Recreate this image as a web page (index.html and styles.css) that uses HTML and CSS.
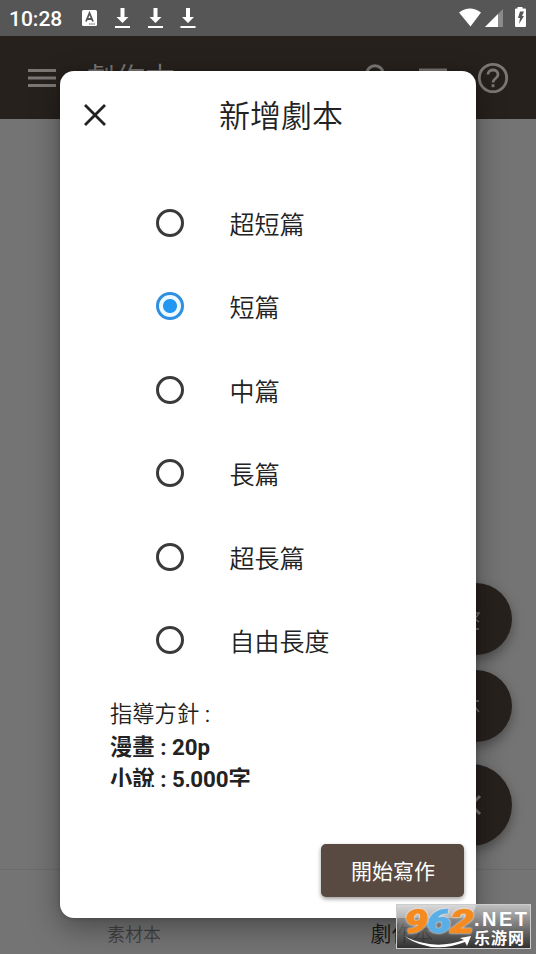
FILE: index.html
```html
<!DOCTYPE html>
<html lang="zh-Hant">
<head>
<meta charset="utf-8">
<title>劇作本</title>
<link rel="stylesheet" href="styles.css">
</head>
<body>
<div class="screen">
  <header class="status">
    <span class="clock">10:28</span>
    <svg class="status-left" width="116" height="24" viewBox="0 0 116 24">
      <rect x="0" y="4" width="15" height="16" rx="1.5" fill="#fff"/>
      <path d="M4 15.5 7.5 7 11 15.5M5.3 13h4.4" fill="none" stroke="#565656" stroke-width="1.8"/>
      <path d="M7 18h6" stroke="#565656" stroke-width="1" stroke-dasharray="1.5 .7"/>
      <g fill="#fff">
        <path id="dl" d="M38.500 2h4v9h4l-6 6-6-6h4zM33 20h15v2H33z"/>
        <use href="#dl" x="33"/>
        <use href="#dl" x="65.500"/>
      </g>
    </svg>
    <svg class="status-right" width="70" height="24" viewBox="0 0 70 24">
      <path d="M0 6.500Q11-1.500 22 6.500L11.500 20.500z" fill="#fff"/>
      <path d="M44 3v18H26z" fill="#8b8b8b"/>
      <path d="M39 8v13H26z" fill="#fff"/>
      <path d="M58.500 1h5v1.500H66q1 0 1 1V20q0 1-1 1h-9q-1 0-1-1V3.500q0-1 1-1h1.500z" fill="#fff"/>
      <path d="M61 5.500h4L63 10h2l-5 8 1-6h-2z" fill="#565656"/>
    </svg>
  </header>
  <div class="appbar">
    <svg width="28" height="20" viewBox="0 0 28 20"><path d="M0 2.500h28M0 10h28M0 17.500h28" stroke="#7b7775" stroke-width="3"/></svg>
    <h1>劇作本</h1>
    <svg class="search" width="30" height="30" viewBox="0 0 30 30"><circle cx="11" cy="11" r="8.300" fill="none" stroke="#7b7775" stroke-width="3"/><path d="m17 17 9 9" stroke="#7b7775" stroke-width="3"/></svg>
    <svg class="sort" width="28" height="20" viewBox="0 0 28 20"><path d="M0 2h28M5 10h18M10 17.500h8" stroke="#7b7775" stroke-width="3"/></svg>
    <svg class="help" width="32" height="32" viewBox="0 0 32 32" fill="none" stroke="#7b7775" stroke-width="2.800"><circle cx="16" cy="16" r="13.700"/><path d="M11 12.500c0-6 10-6 10 0 0 4-5 4-5 8"/><path d="M16 22.200v3"/></svg>
  </div>
  <main class="page">
    <div class="fabs">
      <span class="fab"><svg width="36" height="36" viewBox="0 0 36 36"><path d="M12 12h9l-4 6 4 3M12 28h9"/></svg></span>
      <span class="fab"><svg width="36" height="36" viewBox="0 0 36 36"><path d="M12 13h9M17 19l4 5"/></svg></span>
      <span class="fab fab-large"><svg width="36" height="36" viewBox="0 0 36 36"><path class="thick" d="m9 9 18 18M27 9 9 27"/></svg></span>
    </div>
  </main>
  <nav class="tabs">
    <span class="tab">素材本</span>
    <span class="tab active">劇作本</span>
  </nav>

  <section class="dialog">
    <div class="dialog-head">
      <svg width="22" height="22" viewBox="0 0 22 22"><path d="m1 1 20 20M21 1 1 21" stroke="#222" stroke-width="2.800"/></svg>
      <h2>新增劇本</h2>
    </div>
    <div class="options">
      <div class="option"><i class="radio"></i>超短篇</div>
      <div class="option"><i class="radio checked"></i>短篇</div>
      <div class="option"><i class="radio"></i>中篇</div>
      <div class="option"><i class="radio"></i>長篇</div>
      <div class="option"><i class="radio"></i>超長篇</div>
      <div class="option"><i class="radio"></i>自由長度</div>
    </div>
    <div class="guide">
      <p>指導方針<span class="colon"> :</span></p>
      <p class="strong">漫畫 : 20p</p>
      <p class="strong">小說 : 5,000字</p>
    </div>
    <div class="actions"><span class="button">開始寫作</span></div>
  </section>

  <div class="badge">
    <svg width="133" height="43" viewBox="0 0 133 43">
      <g class="digits">
        <text x="7" y="28" textLength="24" lengthAdjust="spacingAndGlyphs" fill="#f58a1f" stroke="#f58a1f">9</text>
        <text x="30" y="28" textLength="24" lengthAdjust="spacingAndGlyphs" fill="#5aaee6" stroke="#5aaee6">6</text>
        <text x="53" y="28" textLength="24" lengthAdjust="spacingAndGlyphs" fill="#f58a1f" stroke="#f58a1f">2</text>
      </g>
      <path d="M7 31Q36 46 67 35l-4-2 11-2-4 10-2-4Q34 50 7 31" fill="#fff"/>
      <text class="net" x="77" y="21" textLength="53">.NET</text>
      <text class="site" x="77" y="39" textLength="50">乐游网</text>
    </svg>
  </div>
</div>
</body>
</html>
```
FILE: styles.css
```css
* { box-sizing: border-box; }
body, h1, h2, p { margin: 0; }
body { font-family: Roboto, "Noto Sans CJK TC", sans-serif; color: #222; }
svg { display: block; flex: none; }

.screen {
  position: relative;
  width: 536px;
  height: 954px;
  overflow: hidden;
  display: flex;
  flex-direction: column;
  background: #747474;
}
.status {
  height: 36px;
  flex: none;
  display: flex;
  align-items: center;
  padding: 0 9px 0 9px;
  background: #565656;
  color: #fff;
}
.clock { width: 73px; font-size: 21px; font-weight: 500; padding-top: 1px; }
.status-left { margin-bottom: 1px; }
.status-right { margin: 0 -2px 0 auto; }
.appbar {
  height: 83px;
  flex: none;
  display: flex;
  align-items: center;
  padding: 0 28px;
  background: #27211d;
  color: #7b7775;
}
.appbar h1 { margin: 3px 0 0 29px; font-size: 30px; font-weight: 350; line-height: 40px; }
.search { margin: 0 25px 0 auto; }
.sort { margin-right: 30px; }
.help { margin-right: -1px; }
.page { flex: 1; display: flex; justify-content: flex-end; align-items: flex-end; padding: 0 24px 23px 0; }
.fabs { display: flex; flex-direction: column; align-items: flex-end; gap: 15px; }
.fab {
  width: 72px;
  height: 72px;
  display: flex;
  align-items: center;
  justify-content: center;
  border-radius: 50%;
  background: #27211d;
  box-shadow: 0 5px 12px rgba(0, 0, 0, .35);
}
.fab svg { fill: none; stroke: #77736f; stroke-width: 1.5; }
.fab .thick { stroke-width: 3; }
.fab-large { width: 82px; height: 82px; margin-top: 7px; }
.tabs {
  height: 85px;
  flex: none;
  display: flex;
  border-top: 1px solid #6c6c6c;
  padding-top: 45px;
}
.tab { flex: 1; text-align: center; font-size: 18px; font-weight: 350; line-height: 40px; color: #414141; }
.tab.active { font-size: 21px; line-height: 38px; color: #171513; }

.dialog {
  position: absolute;
  left: 60px;
  top: 71px;
  width: 416px;
  height: 847px;
  display: flex;
  flex-direction: column;
  background: #fff;
  border-radius: 14px;
  box-shadow: 0 10px 30px rgba(0, 0, 0, .36), 0 0 5px rgba(0, 0, 0, .2);
}
.dialog-head { height: 87px; display: flex; align-items: center; padding: 0 24px; }
.dialog-head h2 { flex: 1; margin: 5px 18px 0 0; text-align: center; font-size: 31px; font-weight: 350; line-height: 44px; padding-left: 22px; }
.options { padding: 26px 0 0 96px; }
.option { height: 83.5px; display: flex; align-items: center; gap: 45.5px; font-size: 25px; font-weight: 350; line-height: 36px; }
.radio {
  width: 28px;
  height: 28px;
  flex: none;
  margin-bottom: 6px;
  border: 3px solid #3a3a3a;
  border-radius: 50%;
}
.radio.checked { border-color: #2f8fe0; background: radial-gradient(circle, #2196f3 6.500px, #eef9ff 7.500px); }
.guide { height: 102px; margin: 0 50px; padding-top: 13px; overflow: hidden; font-size: 22.300px; font-weight: 350; line-height: 32.600px; white-space: nowrap; }
.colon { font-weight: 400; }
.strong { font-weight: 700; }
.actions { flex: 1; display: flex; justify-content: flex-end; align-items: flex-end; padding: 0 12px 21px; }
.button {
  width: 143px;
  height: 53px;
  border-radius: 5px;
  background: #584a40;
  color: #fff;
  text-align: center;
  text-indent: 1px;
  font-size: 21px;
  line-height: 56px;
  box-shadow: 0 2px 4px rgba(0, 0, 0, .4);
}

.badge {
  position: absolute;
  left: 396px;
  top: 904px;
  width: 135px;
  height: 45px;
  border: 1px solid #ccc;
  background: linear-gradient(#d0d0d0d0, #777777c0 50%, #222222d0);
}
.digits { font: italic 900 33px Roboto, sans-serif; stroke-width: .6px; filter: drop-shadow(0 0 1px #fff); }
.net { font: 900 20px "Liberation Sans", sans-serif; fill: #fff; }
.site { font: 700 16px "Noto Sans CJK SC", sans-serif; fill: #fff; }
```
